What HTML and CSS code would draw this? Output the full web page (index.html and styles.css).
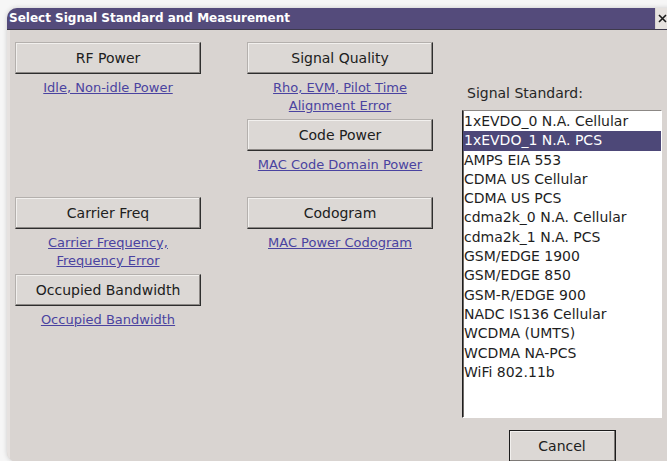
FILE: index.html
```html
<!DOCTYPE html>
<html>
<head>
<meta charset="utf-8">
<title>Select Signal Standard and Measurement</title>
<link rel="stylesheet" href="styles.css">
</head>
<body>
<div class="screen">
  <div class="dialog">
    <div class="title-row">
      <div class="titlebar">Select Signal Standard and Measurement</div>
      <div class="close">
        <svg width="9" height="9" viewBox="0 0 9 9"><path d="M1 1L8 8M8 1L1 8" stroke="#1a1a1a" stroke-width="1.6"/></svg>
      </div>
    </div>
    <div class="content">
      <div class="measures">
        <div class="cell">
          <button class="btn">RF Power</button>
          <a class="caption" href="#">Idle, Non-idle Power</a>
        </div>
        <div class="cell">
          <button class="btn">Signal Quality</button>
          <a class="caption" href="#">Rho, EVM, Pilot Time<br>Alignment Error</a>
          <button class="btn">Code Power</button>
          <a class="caption" href="#">MAC Code Domain Power</a>
        </div>
        <div class="cell">
          <button class="btn">Carrier Freq</button>
          <a class="caption" href="#">Carrier Frequency,<br>Frequency Error</a>
          <button class="btn">Occupied Bandwidth</button>
          <a class="caption" href="#">Occupied Bandwidth</a>
        </div>
        <div class="cell">
          <button class="btn">Codogram</button>
          <a class="caption" href="#">MAC Power Codogram</a>
        </div>
      </div>
      <div class="standards">
        <div class="label">Signal Standard:</div>
        <ul class="listbox">
          <li>1xEVDO_0 N.A. Cellular</li>
          <li class="selected">1xEVDO_1 N.A. PCS</li>
          <li>AMPS EIA 553</li>
          <li>CDMA US Cellular</li>
          <li>CDMA US PCS</li>
          <li>cdma2k_0 N.A. Cellular</li>
          <li>cdma2k_1 N.A. PCS</li>
          <li>GSM/EDGE 1900</li>
          <li>GSM/EDGE 850</li>
          <li>GSM-R/EDGE 900</li>
          <li>NADC IS136 Cellular</li>
          <li>WCDMA (UMTS)</li>
          <li>WCDMA NA-PCS</li>
          <li>WiFi 802.11b</li>
        </ul>
        <button class="btn cancel">Cancel</button>
      </div>
    </div>
  </div>
</div>
</body>
</html>
```

FILE: styles.css
```css
html, body {
  margin: 0;
  padding: 0;
}

body {
  width: 667px;
  height: 461px;
  overflow: hidden;
  background: #f6f6f6;
  font-family: "DejaVu Sans", Verdana, sans-serif;
}

.screen {
  padding: 8px 0 0 7px;
}

.dialog {
  width: 672px;
  height: 454px;
  background: #d9d4d1;
  border-radius: 10px;
  overflow: hidden;
  box-shadow: 0 0 5px rgba(0, 0, 0, 0.18);
}

.title-row {
  display: flex;
  height: 21px;
  border-bottom: 1px solid #3e3a4c;
}

.titlebar {
  flex: 1;
  background: #544b7b;
  color: #ffffff;
  font-weight: bold;
  font-size: 12px;
  line-height: 21px;
  padding-left: 2px;
  white-space: nowrap;
}

.close {
  width: 23px;
  margin-left: 1px;
  background: #e6e2df;
  display: flex;
  align-items: center;
  padding-left: 2px;
  box-sizing: border-box;
}

.content {
  display: flex;
  padding: 12px 0 0 8px;
  height: 100%;
  box-shadow: inset 3px 0 0 #e6e2e0;
}

.measures {
  display: grid;
  grid-template-columns: 186px 186px;
  grid-template-rows: 155px auto;
  column-gap: 46px;
  align-content: start;
}

.cell {
  display: flex;
  flex-direction: column;
}

.btn {
  display: block;
  height: 32px;
  padding: 0;
  margin: 0;
  background: #dcd8d5;
  color: #202020;
  font-family: "DejaVu Sans", Verdana, sans-serif;
  font-size: 14px;
  border: 1px solid;
  border-color: #b4b0ad #2e2e2e #2e2e2e #b4b0ad;
  box-shadow: inset -1px -1px 0 #8c8885, inset 1px 1px 0 #f2f0ee;
}

.caption {
  display: block;
  text-align: center;
  font-size: 13px;
  line-height: 18px;
  padding: 5px 0 4px;
  color: #4a43a0;
  text-decoration: underline;
}

.standards {
  display: flex;
  flex-direction: column;
  margin-left: 29px;
  width: 200px;
}

.label {
  margin-top: 42px;
  padding-left: 5px;
  font-size: 14px;
  line-height: 18px;
  color: #262626;
}

.listbox {
  list-style: none;
  margin: 8px 0 0;
  padding: 1px 0 0;
  height: 308px;
  box-sizing: border-box;
  background: #ffffff;
  border: 1px solid;
  border-color: #8c8885 #ffffff #ffffff #1e1e1e;
  box-shadow: inset 1px 0 0 #6e6a68;
}

.listbox li {
  height: 19.3px;
  line-height: 19.3px;
  padding-left: 1px;
  font-size: 14px;
  color: #1e1e1e;
  white-space: nowrap;
}

.listbox li.selected {
  background: #4d4878;
  color: #ffffff;
}

.cancel {
  width: 107px;
  margin: 12px auto 0;
  border-color: #1c1c1c;
  box-shadow: inset -1px -1px 0 #7e7a77, inset 1px 1px 0 #f2f0ee;
}
```
